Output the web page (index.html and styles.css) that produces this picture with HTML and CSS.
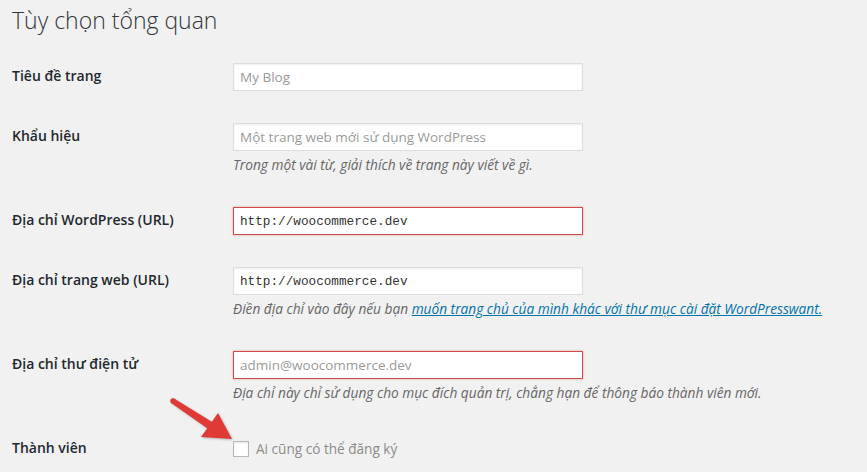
FILE: index.html
```html
<!DOCTYPE html>
<html lang="vi">
<head>
     <meta charset="UTF-8">
     <meta name="viewport" content="width=device-width, initial-scale=1.0">
     <title>Tùy chọn tổng quan</title>
     <link rel="stylesheet" href="styles.css">
</head>
<body>
     <div class="wrap">
          <h1>Tùy chọn tổng quan</h1>
          <div class="form-table">
               <div class="row">
                    <div class="th">Tiêu đề trang</div>
                    <div class="td">
                         <input type="text" class="regular-text muted" value="My Blog">
                    </div>
               </div>
               <div class="row">
                    <div class="th">Khẩu hiệu</div>
                    <div class="td">
                         <input type="text" class="regular-text muted" value="Một trang web mới sử dụng WordPress">
                         <p class="description">Trong một vài từ, giải thích về trang này viết về gì.</p>
                    </div>
               </div>
               <div class="row">
                    <div class="th">Địa chỉ WordPress (URL)</div>
                    <div class="td">
                         <input type="text" class="regular-text code error" value="http://woocommerce.dev">
                    </div>
               </div>
               <div class="row">
                    <div class="th">Địa chỉ trang web (URL)</div>
                    <div class="td">
                         <input type="text" class="regular-text code" value="http://woocommerce.dev">
                         <p class="description">Điền địa chỉ vào đây nếu bạn <a href="#">muốn trang chủ của mình khác với thư mục cài đặt WordPresswant.</a></p>
                    </div>
               </div>
               <div class="row">
                    <div class="th">Địa chỉ thư điện tử</div>
                    <div class="td">
                         <input type="text" class="regular-text muted error" value="admin@woocommerce.dev">
                         <p class="description">Địa chỉ này chỉ sử dụng cho mục đích quản trị, chẳng hạn để thông báo thành viên mới.</p>
                    </div>
               </div>
               <div class="row">
                    <div class="th">Thành viên</div>
                    <div class="td td-check">
                         <label class="check"><span class="box"></span>Ai cũng có thể đăng ký</label>
                    </div>
               </div>
          </div>
          <svg class="pointer" width="80" height="60" viewBox="0 0 80 60">
               <g fill="#e03a36">
                    <circle cx="8" cy="13" r="2.7"/>
                    <polygon points="9.5,10.75 46.8,33.7 53,25 67,51 36,49 42.2,40.3 6.5,15.25"/>
               </g>
          </svg>
     </div>
</body>
</html>
```

FILE: styles.css
```css
*{
     box-sizing: border-box;
}
html,body{
     margin: 0;
     padding: 0;
     background: #f1f1f1;
     font-family: "Open Sans", "Noto Sans", sans-serif;
     font-size: 13px;
     color: #444;
}
.wrap{
     position: relative;
     padding: 0 12px;
     height: 472px;
     overflow: hidden;
}
.wrap h1{
     margin: 6px 0 12px;
     font-size: 23px;
     font-weight: 300;
     line-height: 29px;
     color: #32373c;
}

/* bang tuy chon */
.row{
     display: grid;
     grid-template-columns: 221px 1fr;
}
.th{
     padding: 20px 10px 20px 0;
     font-size: 14px;
     font-weight: 600;
     line-height: 18px;
     color: #23282d;
}
.td{
     padding: 15px 10px 15px 0;
}
.regular-text{
     display: block;
     width: 350px;
     height: 28px;
     margin: 1px 0;
     padding: 3px 6px;
     border: 1px solid #ddd;
     background: #fff;
     box-shadow: inset 0 1px 2px rgba(0,0,0,.07);
     font-family: "Open Sans", sans-serif;
     font-size: 13.5px;
     color: #32373c;
     outline: none;
}
.regular-text.muted{
     color: #9a9a9a;
}
.regular-text.code{
     font-family: "Liberation Mono", "DejaVu Sans Mono", monospace;
     font-size: 12.7px;
     color: #333;
}
.regular-text.error{
     border-color: #d04a48;
     box-shadow: 0 0 2px rgba(220,50,50,.45);
}
.description{
     margin: 4px 0 2px;
     font-size: 13.7px;
     line-height: 19px;
     font-style: italic;
     color: #666;
}
.description a{
     color: #0073aa;
     text-decoration: underline;
}
.td-check{
     padding-top: 20px;
}
.check{
     display: flex;
     align-items: center;
     height: 18px;
     font-size: 13.6px;
     color: #8c8c8c;
}
.check .box{
     width: 16px;
     height: 16px;
     margin: 1px 7px 0 0;
     border: 1px solid #b4b9be;
     background: #fff;
     box-shadow: inset 0 1px 2px rgba(0,0,0,.1);
}

/* mui ten chu thich */
.pointer{
     position: absolute;
     left: 165px;
     top: 388px;
     filter: drop-shadow(1px 1px 1px rgba(0,0,0,.25));
}
```
